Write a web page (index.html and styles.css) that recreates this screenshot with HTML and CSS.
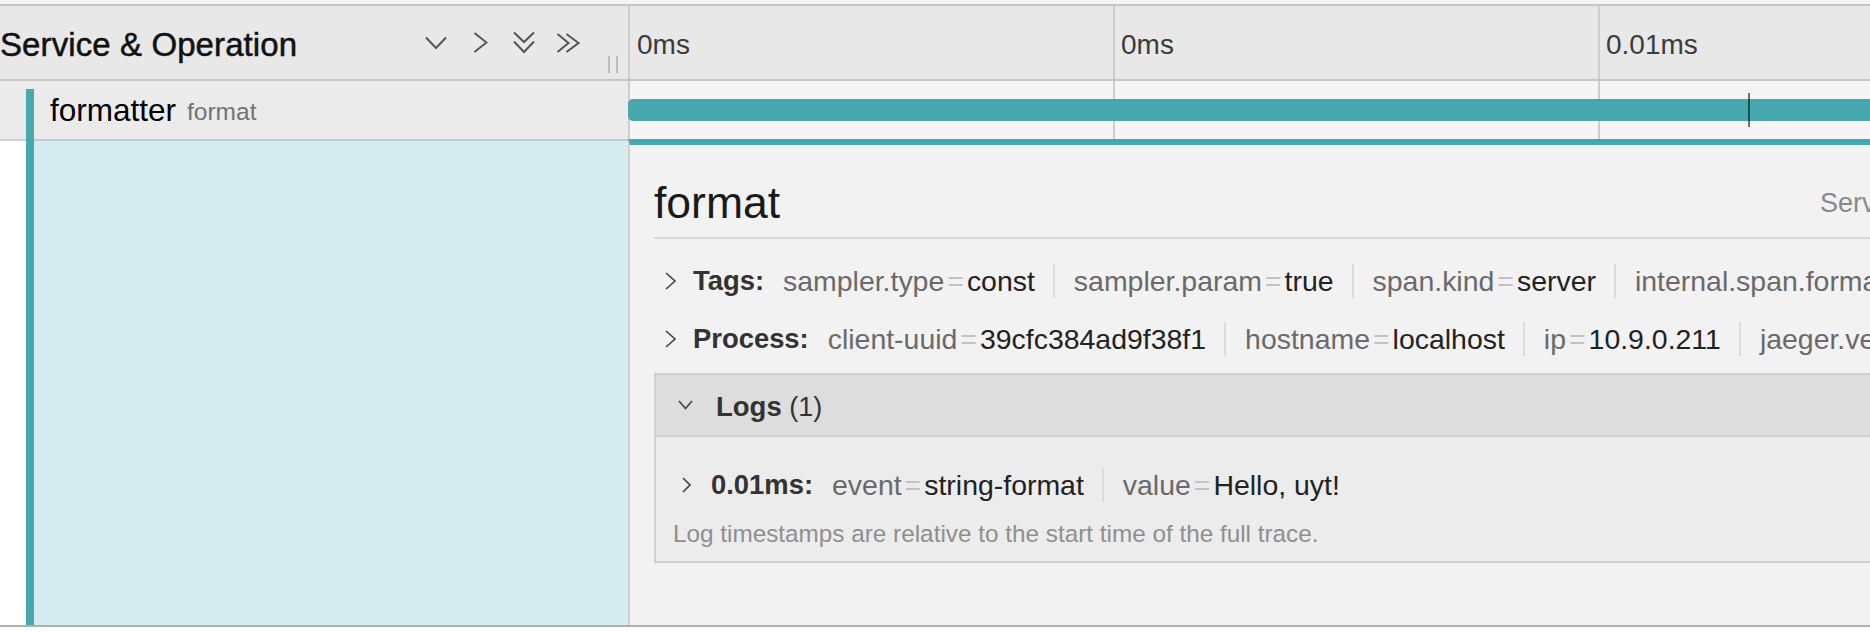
FILE: index.html
```html
<!DOCTYPE html>
<html lang="en">
<head>
<meta charset="utf-8">
<title>Trace detail</title>
<link rel="stylesheet" href="styles.css">
</head>
<body>
<div class="top-strip"></div>
<div class="viewer">
  <div class="header-row">
    <div class="name-col header-name">
      <h3 class="header-title">Service &amp; Operation</h3>
      <div class="header-icons">
        <span class="icon-btn"><svg width="22" height="14" viewBox="0 0 22 14"><polyline points="1,1.5 11,12 21,1.5"/></svg></span>
        <span class="icon-btn"><svg width="15" height="21" viewBox="0 0 15 21"><polyline points="1.5,1 13.5,10.5 1.5,20"/></svg></span>
        <span class="icon-btn"><svg width="22" height="23" viewBox="0 0 22 23"><polyline points="1,1.5 11,11 21,1.5"/><polyline points="1,10.5 11,21 21,10.5"/></svg></span>
        <span class="icon-btn"><svg width="24" height="20" viewBox="0 0 24 20"><polyline points="1.5,1 12.5,10 1.5,19"/><polyline points="10.5,1 22.5,10 10.5,19"/></svg></span>
      </div>
      <span class="resizer"></span>
    </div>
    <div class="ticks">
      <div class="tick">0ms</div>
      <div class="tick">0ms</div>
      <div class="tick">0.01ms</div>
      <div class="tick">0.01ms</div>
    </div>
  </div>

  <div class="span-row">
    <div class="name-col span-name">
      <div class="span-name-inner">
        <span class="svc-name">formatter</span>
        <small class="op-name">format</small>
      </div>
    </div>
    <div class="span-timeline">
      <div class="tick-cell"></div>
      <div class="tick-cell"></div>
      <div class="tick-cell"></div>
      <div class="tick-cell"></div>
      <div class="span-bar" style="left: 0px; width: 1800px;"></div>
      <div class="log-marker" style="left: 1120px;"></div>
    </div>
  </div>

  <div class="detail-row">
    <div class="name-col detail-left">
      <div class="detail-left-inner"></div>
    </div>
    <div class="detail-panel">
      <div class="detail-title-row">
        <h2 class="detail-title">format</h2>
        <ul class="overview">
          <li><span class="ov-label">Service:</span> formatter</li>
          <li><span class="ov-label">Duration:</span> 0.02ms</li>
          <li><span class="ov-label">Start Time:</span> 0ms</li>
        </ul>
      </div>

      <div class="kv-header">
        <svg class="chev-right" width="11" height="18" viewBox="0 0 11 18"><polyline points="1,1 10,9 1,17"/></svg>
        <strong class="kv-label">Tags:</strong>
        <ul class="kv-summary">
          <li><span class="k">sampler.type</span><span class="eq">=</span><span class="v">const</span></li>
          <li><span class="k">sampler.param</span><span class="eq">=</span><span class="v">true</span></li>
          <li><span class="k">span.kind</span><span class="eq">=</span><span class="v">server</span></li>
          <li><span class="k">internal.span.format</span><span class="eq">=</span><span class="v">proto</span></li>
        </ul>
      </div>

      <div class="kv-header">
        <svg class="chev-right" width="11" height="18" viewBox="0 0 11 18"><polyline points="1,1 10,9 1,17"/></svg>
        <strong class="kv-label">Process:</strong>
        <ul class="kv-summary">
          <li><span class="k">client-uuid</span><span class="eq">=</span><span class="v">39cfc384ad9f38f1</span></li>
          <li><span class="k">hostname</span><span class="eq">=</span><span class="v">localhost</span></li>
          <li><span class="k">ip</span><span class="eq">=</span><span class="v">10.9.0.211</span></li>
          <li><span class="k">jaeger.version</span><span class="eq">=</span><span class="v">Go-2.9.0</span></li>
        </ul>
      </div>

      <div class="logs">
        <div class="logs-header">
          <svg class="chev-down" width="15" height="10" viewBox="0 0 15 10"><polyline points="1,1 7.5,8.5 14,1"/></svg>
          <strong class="logs-title">Logs</strong><span class="logs-count">&nbsp;(1)</span>
        </div>
        <div class="logs-body">
          <div class="log-row">
            <svg class="chev-right small" width="9" height="16" viewBox="0 0 9 16"><polyline points="1,1 8,8 1,15"/></svg>
            <strong class="kv-label">0.01ms:</strong>
            <ul class="kv-summary">
              <li><span class="k">event</span><span class="eq">=</span><span class="v">string-format</span></li>
              <li><span class="k">value</span><span class="eq">=</span><span class="v">Hello, uyt!</span></li>
            </ul>
          </div>
          <p class="logs-note">Log timestamps are relative to the start time of the full trace.</p>
        </div>
      </div>
    </div>
  </div>
</div>
</body>
</html>
```

FILE: styles.css
```css
html, body {
  margin: 0;
  padding: 0;
  overflow: hidden;
  background: #ffffff;
}

body {
  font-family: "Liberation Sans", Arial, sans-serif;
  color: #333;
  width: 1870px;
  height: 632px;
}

.top-strip {
  height: 4px;
  background: #f3f3f3;
}

.viewer {
  width: 2400px;
}

.name-col {
  flex: 0 0 628px;
  width: 628px;
  box-sizing: border-box;
}

/* ---------- header ---------- */
.header-row {
  display: flex;
  height: 77px;
  box-sizing: border-box;
  border-top: 2px solid #c6c6c6;
  border-bottom: 2px solid #c6c6c6;
  background: #e8e8e8;
}

.header-name {
  display: flex;
  align-items: center;
  padding-right: 10px;
}

.header-title {
  margin: 0;
  padding-top: 4px;
  font-size: 33px;
  font-weight: normal;
  color: #111;
  -webkit-text-stroke: 0.5px #111;
  letter-spacing: 0.1px;
}

.header-icons {
  margin-left: auto;
  display: flex;
  align-items: center;
}

.icon-btn {
  width: 44px;
  display: flex;
  justify-content: center;
  align-items: center;
}

.icon-btn svg polyline {
  fill: none;
  stroke: #555;
  stroke-width: 2;
}

.resizer {
  align-self: flex-end;
  margin-left: 18px;
  margin-bottom: 6px;
  width: 6px;
  height: 17px;
  border-left: 2px solid #bdbdbd;
  border-right: 2px solid #bdbdbd;
}

.ticks {
  display: flex;
}

.tick {
  flex: 0 0 485px;
  box-sizing: border-box;
  border-left: 2px solid #cdcdcd;
  padding-left: 6px;
  padding-top: 4px;
  display: flex;
  align-items: center;
  font-size: 28px;
  color: #3c3c3c;
}

.tick:first-child {
  padding-left: 7px;
}

/* ---------- span row ---------- */
.span-row {
  display: flex;
  height: 58px;
}

.span-name {
  background: #ebebeb;
  padding-top: 8px;
  padding-left: 26px;
  display: flex;
}

.span-name-inner {
  flex: 1;
  border-left: 8px solid #47a8af;
  padding-left: 16px;
  padding-bottom: 7px;
  display: flex;
  align-items: center;
}

.svc-name {
  font-size: 31.5px;
  color: #000;
}

.op-name {
  font-size: 24.5px;
  color: #737373;
  margin-left: 11px;
  padding-top: 3px;
}

.span-timeline {
  position: relative;
  flex: 1;
  display: flex;
  background: #f5f5f5;
}

.tick-cell {
  flex: 0 0 485px;
  box-sizing: border-box;
  border-left: 2px solid #cdcdcd;
}

.span-bar {
  position: absolute;
  top: 18px;
  height: 22px;
  background: #47a8af;
  border-radius: 5px 0 0 5px;
}

.log-marker {
  position: absolute;
  top: 12px;
  width: 2px;
  height: 34px;
  background: rgba(0, 0, 0, 0.55);
}

/* ---------- detail row ---------- */
.detail-row {
  display: flex;
  height: 488px;
  box-sizing: border-box;
  border-bottom: 2px solid #afafaf;
}

.detail-left {
  padding-left: 26px;
  display: flex;
  background: #fff;
  box-shadow: inset 0 2px 0 #d0d0d0;
}

.detail-left-inner {
  flex: 1;
  border-left: 8px solid #47a8af;
  background: #d5ecee;
  box-shadow: inset 0 2px 0 #b8d0d3;
}

.detail-panel {
  flex: 1;
  box-sizing: border-box;
  background: #f2f2f2;
  border-top: 6px solid #47a8af;
  border-left: 2px solid #cfcfcf;
  padding-left: 24px;
}

.detail-title-row {
  display: flex;
  align-items: center;
  padding-top: 34px;
  padding-bottom: 10px;
  border-bottom: 2px solid #d9d9d9;
  margin-bottom: 11px;
}

.detail-title {
  flex: 0 0 1166px;
  margin: 0;
  font-size: 44.5px;
  line-height: 48px;
  font-weight: normal;
  color: #1a1a1a;
}

.overview {
  display: flex;
  gap: 30px;
  margin: 0;
  padding: 0;
  list-style: none;
  font-size: 27px;
  color: #555;
  white-space: nowrap;
}

.ov-label {
  color: #8a8a8a;
}

.kv-header {
  height: 58px;
  box-sizing: border-box;
  padding-top: 3px;
  display: flex;
  align-items: center;
  white-space: nowrap;
}

.chev-right {
  margin-left: 11px;
  margin-right: 17px;
  flex: 0 0 auto;
}

.chev-right polyline,
.chev-down polyline {
  fill: none;
  stroke: #444;
  stroke-width: 1.6;
}

.kv-label {
  font-size: 27.4px;
  font-weight: bold;
  color: #333;
  margin-right: 19px;
}

.kv-summary {
  display: flex;
  margin: 0;
  padding: 0;
  list-style: none;
  font-size: 28.45px;
  line-height: 34px;
}

.kv-summary li {
  padding: 0 18px 0 19px;
  border-left: 2px solid #dcdcdc;
}

.kv-summary li:first-child {
  padding-left: 0;
  border-left: none;
}

.k {
  color: #6a6a6a;
}

.eq {
  color: #c2c2c2;
  padding: 0 3px;
}

.v {
  color: #222;
}

/* ---------- logs ---------- */
.logs {
  margin-top: 7px;
  border: 2px solid #d0d0d0;
  height: 190px;
  box-sizing: border-box;
  white-space: nowrap;
}

.logs-header {
  height: 62px;
  box-sizing: border-box;
  background: #dddddd;
  border-bottom: 2px solid #d0d0d0;
  display: flex;
  align-items: center;
  padding-left: 22px;
  padding-top: 4px;
  font-size: 27.5px;
  color: #333;
}

.chev-down {
  margin-right: 23px;
  margin-top: -4px;
}

.logs-title {
  font-weight: bold;
}

.logs-count {
  font-size: 27px;
}

.logs-body {
  background: #ececec;
  height: 124px;
  box-sizing: border-box;
  padding: 31px 0 0 17px;
}

.log-row {
  display: flex;
  align-items: center;
  height: 34px;
}

.chev-right.small {
  margin-left: 9px;
  margin-right: 20px;
}

.logs-note {
  margin: 18px 0 0;
  font-size: 24.3px;
  line-height: 28px;
  color: #8f8f8f;
}
```
